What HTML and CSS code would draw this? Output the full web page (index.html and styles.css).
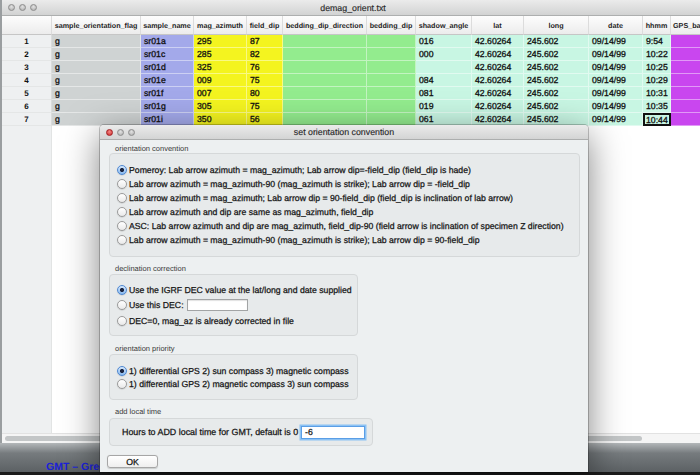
FILE: index.html
```html
<!DOCTYPE html>
<html>
<head>
<meta charset="utf-8">
<title>demag_orient.txt</title>
<link rel="stylesheet" href="styles.css">
</head>
<body>
<div class="desktop">
  <div class="mainwin">
    <div class="titlebar">
      <div class="lights"><span class="light"></span><span class="light"></span><span class="light"></span></div>
      <div class="title">demag_orient.txt</div>
      <div></div>
    </div>
    <div class="grid">
      <div class="hd"></div>
      <div class="hd">sample_orientation_flag</div>
      <div class="hd">sample_name</div>
      <div class="hd">mag_azimuth</div>
      <div class="hd">field_dip</div>
      <div class="hd">bedding_dip_direction</div>
      <div class="hd">bedding_dip</div>
      <div class="hd">shadow_angle</div>
      <div class="hd">lat</div>
      <div class="hd">long</div>
      <div class="hd">date</div>
      <div class="hd">hhmm</div>
      <div class="hd hd-left">GPS_base</div>

      <div class="cell rn">1</div><div class="cell flag">g</div><div class="cell name">sr01a</div><div class="cell yel">295</div><div class="cell yel">87</div><div class="cell grn"></div><div class="cell grn"></div><div class="cell mint">016</div><div class="cell mint">42.60264</div><div class="cell mint">245.602</div><div class="cell mint">09/14/99</div><div class="cell mint">9:54</div><div class="cell gps"></div>
      <div class="cell rn">2</div><div class="cell flag">g</div><div class="cell name">sr01c</div><div class="cell yel">285</div><div class="cell yel">82</div><div class="cell grn"></div><div class="cell grn"></div><div class="cell mint">000</div><div class="cell mint">42.60264</div><div class="cell mint">245.602</div><div class="cell mint">09/14/99</div><div class="cell mint">10:22</div><div class="cell gps"></div>
      <div class="cell rn">3</div><div class="cell flag">g</div><div class="cell name">sr01d</div><div class="cell yel">325</div><div class="cell yel">76</div><div class="cell grn"></div><div class="cell grn"></div><div class="cell mint"></div><div class="cell mint">42.60264</div><div class="cell mint">245.602</div><div class="cell mint">09/14/99</div><div class="cell mint">10:25</div><div class="cell gps"></div>
      <div class="cell rn">4</div><div class="cell flag">g</div><div class="cell name">sr01e</div><div class="cell yel">009</div><div class="cell yel">75</div><div class="cell grn"></div><div class="cell grn"></div><div class="cell mint">084</div><div class="cell mint">42.60264</div><div class="cell mint">245.602</div><div class="cell mint">09/14/99</div><div class="cell mint">10:29</div><div class="cell gps"></div>
      <div class="cell rn">5</div><div class="cell flag">g</div><div class="cell name">sr01f</div><div class="cell yel">007</div><div class="cell yel">80</div><div class="cell grn"></div><div class="cell grn"></div><div class="cell mint">081</div><div class="cell mint">42.60264</div><div class="cell mint">245.602</div><div class="cell mint">09/14/99</div><div class="cell mint">10:31</div><div class="cell gps"></div>
      <div class="cell rn">6</div><div class="cell flag">g</div><div class="cell name">sr01g</div><div class="cell yel">305</div><div class="cell yel">75</div><div class="cell grn"></div><div class="cell grn"></div><div class="cell mint">019</div><div class="cell mint">42.60264</div><div class="cell mint">245.602</div><div class="cell mint">09/14/99</div><div class="cell mint">10:35</div><div class="cell gps"></div>
      <div class="cell rn">7</div><div class="cell flag">g</div><div class="cell name">sr01i</div><div class="cell yel">350</div><div class="cell yel">56</div><div class="cell grn"></div><div class="cell grn"></div><div class="cell mint">061</div><div class="cell mint">42.60264</div><div class="cell mint">245.602</div><div class="cell mint">09/14/99</div><div class="cell mint sel">10:44</div><div class="cell gps"></div>
    </div>
    <div class="blank"><div class="blank-rn"></div><div class="blank-main"></div></div>
    <div class="hscroll"><div class="thumb"></div></div>
  </div>
  <div class="below"><span class="gmt">GMT – Gree</span></div>
  <div class="dock"></div>

  <div class="dialog">
    <div class="dtitlebar">
      <div class="lights"><span class="light red"></span><span class="light"></span><span class="light"></span></div>
      <div class="dtitle">set orientation convention</div>
      <div></div>
    </div>
    <div class="dbody">
      <div class="glabel gl1">orientation convention</div>
      <div class="gbox gb1">
        <div class="radio"><span class="rb on"></span>Pomeroy: Lab arrow azimuth = mag_azimuth; Lab arrow dip=-field_dip (field_dip is hade)</div>
        <div class="radio"><span class="rb"></span>Lab arrow azimuth = mag_azimuth-90 (mag_azimuth is strike); Lab arrow dip = -field_dip</div>
        <div class="radio"><span class="rb"></span>Lab arrow azimuth = mag_azimuth; Lab arrow dip = 90-field_dip (field_dip is inclination of lab arrow)</div>
        <div class="radio"><span class="rb"></span>Lab arrow azimuth and dip are same as mag_azimuth, field_dip</div>
        <div class="radio"><span class="rb"></span>ASC: Lab arrow azimuth and dip are mag_azimuth, field_dip-90 (field arrow is inclination of specimen Z direction)</div>
        <div class="radio"><span class="rb"></span>Lab arrow azimuth = mag_azimuth-90 (mag_azimuth is strike); Lab arrow dip = 90-field_dip</div>
      </div>

      <div class="glabel gl2">declination correction</div>
      <div class="gbox gb2">
        <div class="radio"><span class="rb on"></span>Use the IGRF DEC value at the lat/long and date supplied</div>
        <div class="radio r16"><span class="rb"></span>Use this DEC:<span class="field dec"></span></div>
        <div class="radio r16"><span class="rb"></span>DEC=0, mag_az is already corrected in file</div>
      </div>

      <div class="glabel gl3">orientation priority</div>
      <div class="gbox gb3">
        <div class="radio r13"><span class="rb on"></span>1) differential GPS 2) sun compass 3) magnetic compass</div>
        <div class="radio r13"><span class="rb"></span>1) differential GPS 2) magnetic compass 3) sun compass</div>
      </div>

      <div class="glabel gl4">add local time</div>
      <div class="gbox gb4">
        <span class="hours">Hours to ADD local time for GMT, default is 0</span>
        <span class="field focus">-6</span>
      </div>

      <div class="okbtn">OK</div>
    </div>
  </div>
</div>
</body>
</html>
```

FILE: styles.css
```css
* { box-sizing: border-box; margin: 0; padding: 0; }
html, body { width: 700px; height: 475px; overflow: hidden; }
body { font-family: "Liberation Sans", Arial, sans-serif; background: #5b6063; text-rendering: geometricPrecision; }

.desktop { position: relative; width: 700px; height: 475px; display: flex; flex-direction: column; }

/* main window */
.mainwin { height: 443px; flex: none; display: flex; flex-direction: column; background: #fff; border-left: 2px solid #9a9ea0; overflow: hidden; }
.titlebar { height: 16px; flex: none; display: grid; grid-template-columns: 1fr auto 1fr; align-items: center; background: linear-gradient(#ebebeb, #d2d3d3); border-bottom: 1px solid #adafaf; }
.title { font-size: 8.8px; color: #2a2a2a; padding-left: 4px; -webkit-text-stroke: 0.15px #2a2a2a; }
.lights { display: flex; gap: 4px; padding-left: 6px; }
.light { width: 7px; height: 7px; border-radius: 50%; background: radial-gradient(circle at 50% 35%, #e2e2e2, #acacac); border: 0.5px solid #8d8d8d; }
.light.red { background: radial-gradient(circle at 50% 35%, #f48a86, #cf2a2c); border-color: #a31f22; }

.grid { display: grid; grid-template-columns: 50px 89px 53px 53px 36px 84px 49px 56px 52px 65px 54px 28px 60px; grid-template-rows: 19px repeat(7, 13px); font-size: 8.7px; flex: none; }
.hd { background: linear-gradient(#fdfdfd, #ececec); border-right: 1px solid #dcdcdc; border-bottom: 1px solid #c6c6c6; font-weight: bold; font-size: 7.2px; color: #1e1e1e; display: flex; align-items: center; justify-content: center; white-space: nowrap; overflow: hidden; }
.hd-left { justify-content: flex-start; padding-left: 2px; }
.cell { display: flex; align-items: center; padding-left: 3px; border-right: 1px solid rgba(255,255,255,0.45); border-bottom: 1px solid rgba(255,255,255,0.45); white-space: nowrap; overflow: hidden; color: #111; -webkit-text-stroke: 0.3px #111; }
.rn { background: #eef0f1; justify-content: center; padding-left: 0; font-weight: bold; font-size: 8px; border-right: 1px solid #dadcdc; border-bottom: 1px solid #e4e6e6; -webkit-text-stroke: 0; }
.flag { background: #cfd3d3; }
.name { background: #a3a9ea; }
.yel { background: #f4f41f; }
.grn { background: #93ec8e; }
.mint { background: #c8f6e3; }
.gps { background: #c946ef; }
.sel { border: 2px solid #111; padding-left: 1px; }

.blank { flex: 1; display: flex; }
.blank-rn { width: 50px; background: #eef0f1; border-right: 1px solid #e2e4e4; }
.blank-main { flex: 1; background: #fff; }
.hscroll { height: 10px; flex: none; background: #f5f5f5; border-top: 1px solid #e2e2e2; padding: 2px 0 2px 3px; }
.thumb { width: 637px; height: 5px; border-radius: 3px; background: #c3c6c7; }

.below { height: 29px; flex: none; background: linear-gradient(#b3b7b9, #767b7e 35%, #5c6164); padding: 18px 0 0 46px; overflow: hidden; line-height: 10px; }
.gmt { font-size: 10.5px; font-weight: bold; color: #1c22d8; white-space: nowrap; }
.dock { height: 3px; flex: none; background: #1b1b1b; }

/* dialog window */
.dialog { position: absolute; left: 100px; top: 125px; width: 488px; height: 347px; background: #edf0f1; box-shadow: 0 10px 36px rgba(0,0,0,0.5), 0 0 0 1px rgba(0,0,0,0.22); border-radius: 4px 4px 0 0; display: flex; flex-direction: column; overflow: hidden; }
.dtitlebar { height: 15px; flex: none; display: grid; grid-template-columns: 1fr auto 1fr; align-items: center; background: linear-gradient(#ebebeb, #d3d4d4); border-bottom: 1px solid #acaeae; }
.dtitle { font-size: 8.8px; color: #2a2a2a; -webkit-text-stroke: 0.15px #2a2a2a; }
.dbody { flex: 1; padding: 0 9px; display: flex; flex-direction: column; align-items: flex-start; }

.glabel { font-size: 7.5px; line-height: 10px; color: #3a3a3a; padding-left: 6px; }
.gl1 { padding-top: 4px; margin-bottom: -1px; }
.gl2 { padding-top: 7px; }
.gl3 { padding-top: 8px; }
.gl4 { padding-top: 7px; margin-bottom: 1px; }

.gbox { background: #e7eaeb; border: 1px solid #d5d8d9; border-radius: 4px; padding: 9px 7px; display: flex; flex-direction: column; }
.gb1 { width: 471px; }
.gb2 { width: 249px; padding: 8px 7px 6px; }
.gb3 { width: 249px; }
.gb4 { width: 264px; height: 28px; padding: 0 7px 0 12px; flex-direction: row; align-items: center; }

.radio { display: flex; align-items: center; height: 14px; font-size: 8.7px; color: #151515; white-space: nowrap; -webkit-text-stroke: 0.25px #151515; }
.r16 { height: 16px; }
.r13 { height: 13px; }
.rb { flex: none; width: 10px; height: 10px; margin-right: 2px; border-radius: 50%; border: 1px solid #9b9b9b; background: linear-gradient(#ffffff, #e9e9e9); box-shadow: 0 0.5px 1px rgba(0,0,0,0.18); }
.rb.on { border-color: #4f88d2; background: radial-gradient(circle, #1b2540 0, #1b2540 1.7px, rgba(0,0,0,0) 2.4px), linear-gradient(#d6e8fc, #86b8ef); }

.field { display: block; background: #fff; border: 1px solid #a2a4a5; box-shadow: inset 0 1px 1px rgba(0,0,0,0.12); }
.dec { width: 61px; height: 12px; margin-left: 3px; }
.hours { font-size: 8.9px; color: #151515; white-space: nowrap; -webkit-text-stroke: 0.25px #151515; }
.focus { margin-left: auto; width: 64px; height: 13px; border: 1px solid #5a9ee6; box-shadow: 0 0 0 1.5px #8cc2f4; font-size: 8.7px; line-height: 11px; padding-left: 3px; color: #111; -webkit-text-stroke: 0.25px #111; }

.okbtn { margin: 9px 0 0 -2px; width: 51px; height: 13px; border: 1px solid #a6a6a6; border-radius: 3px; background: linear-gradient(#ffffff, #efefef); font-size: 8.7px; color: #111; display: flex; align-items: center; justify-content: center; box-shadow: 0 0.5px 1px rgba(0,0,0,0.15); -webkit-text-stroke: 0.25px #111; }
```
